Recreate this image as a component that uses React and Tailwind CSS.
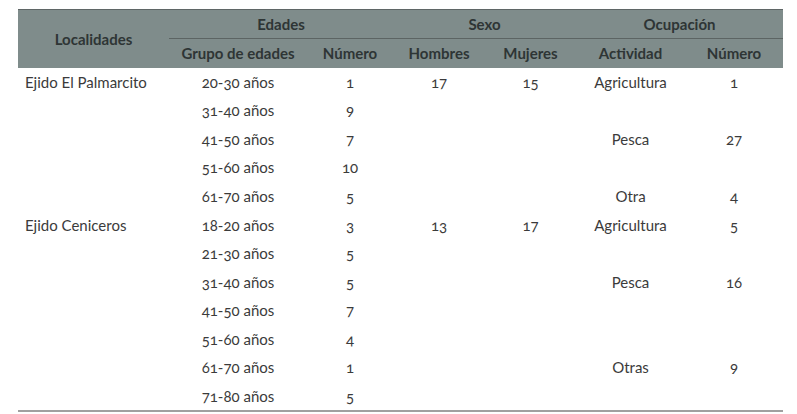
const rows = [
  ['Ejido El Palmarcito', '20-30 años', '1', '17', '15', 'Agricultura', '1'],
  ['', '31-40 años', '9', '', '', '', ''],
  ['', '41-50 años', '7', '', '', 'Pesca', '27'],
  ['', '51-60 años', '10', '', '', '', ''],
  ['', '61-70 años', '5', '', '', 'Otra', '4'],
  ['Ejido Ceniceros', '18-20 años', '3', '13', '17', 'Agricultura', '5'],
  ['', '21-30 años', '5', '', '', '', ''],
  ['', '31-40 años', '5', '', '', 'Pesca', '16'],
  ['', '41-50 años', '7', '', '', '', ''],
  ['', '51-60 años', '4', '', '', '', ''],
  ['', '61-70 años', '1', '', '', 'Otras', '9'],
  ['', '71-80 años', '5', '', '', '', ''],
];

export default function App() {
  return (
    <div className="w-[797px] h-[414px] bg-white pt-[9px] pl-[18px]" style={{ fontFamily: 'Lato, "Open Sans", sans-serif' }}>
      <table className="w-[765px] table-fixed border-collapse text-[15px] text-[#3b3b3b] oldstyle-nums">
        <colgroup>
          <col className="w-[151px]" />
          <col className="w-[138px]" />
          <col className="w-[86px]" />
          <col className="w-[92px]" />
          <col className="w-[91px]" />
          <col className="w-[109px]" />
          <col className="w-[98px]" />
        </colgroup>
        <thead className="bg-[#7f8c8b] text-[#2e3535] font-bold">
          <tr className="h-[29px] border-t border-[#5f6666]">
            <th rowSpan={2} className="font-bold">Localidades</th>
            <th colSpan={2} className="border-b border-[#5c6463] font-bold">Edades</th>
            <th colSpan={2} className="border-b border-[#5c6463] font-bold">Sexo</th>
            <th colSpan={2} className="border-b border-[#5c6463] font-bold">Ocupación</th>
          </tr>
          <tr className="h-[29px]">
            <th className="font-bold">Grupo de edades</th>
            <th className="font-bold">Número</th>
            <th className="font-bold">Hombres</th>
            <th className="font-bold">Mujeres</th>
            <th className="font-bold">Actividad</th>
            <th className="font-bold">Número</th>
          </tr>
        </thead>
        <tbody className="border-b-2 border-[#a0a0a0]">
          {rows.map((r, i) => (
            <tr key={i} className="h-[28.6px]">
              <td className="pl-[7px] text-left">{r[0]}</td>
              <td className="text-center">{r[1]}</td>
              <td className="text-center">{r[2]}</td>
              <td className="text-center">{r[3]}</td>
              <td className="text-center">{r[4]}</td>
              <td className="text-center">{r[5]}</td>
              <td className="text-center">{r[6]}</td>
            </tr>
          ))}
        </tbody>
      </table>
    </div>
  );
}
